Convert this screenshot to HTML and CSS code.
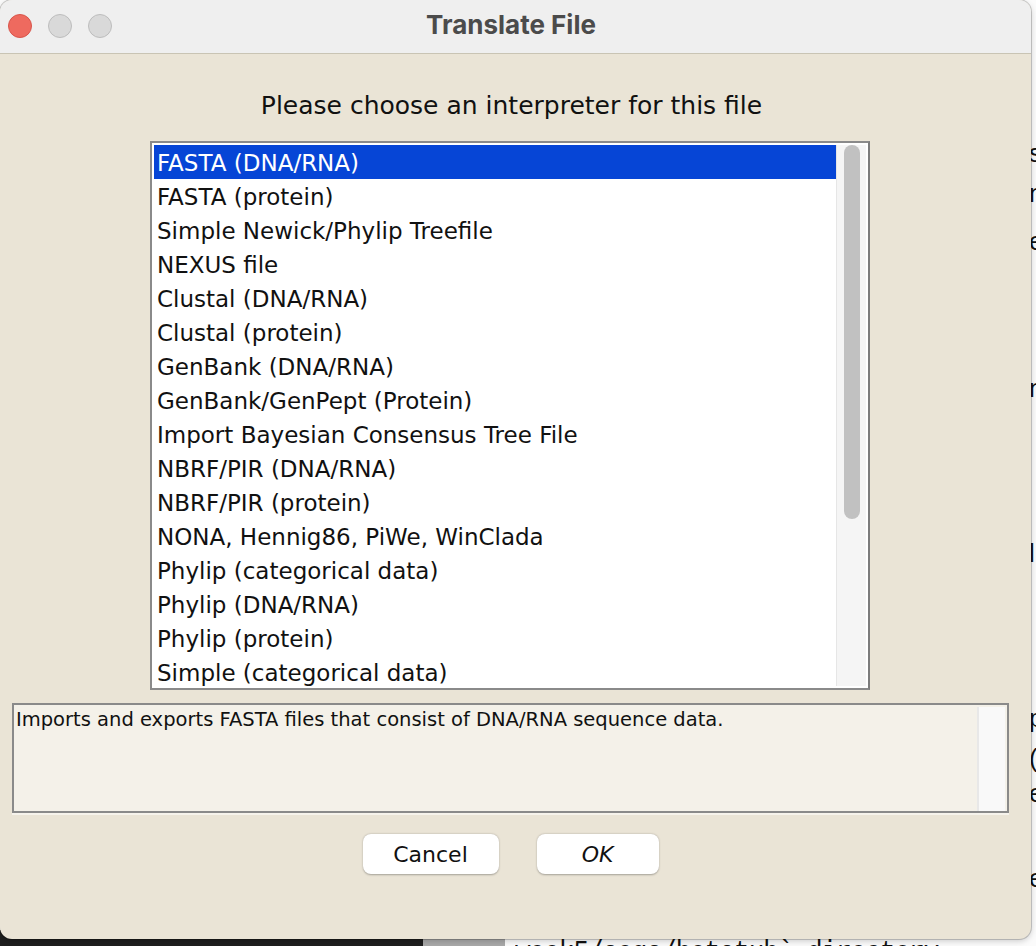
FILE: index.html
```html
<!DOCTYPE html>
<html>
<head>
<meta charset="utf-8">
<link rel="stylesheet" href="styles.css">
</head>
<body>
<div class="screen">
  <div class="doc-edge">
    <span class="g g1">s</span>
    <span class="g g2">n</span>
    <span class="g g3">e</span>
    <span class="g g4">n</span>
    <span class="g g5">l</span>
    <span class="g g6">p</span>
    <span class="g g7">(</span>
    <span class="g g8">e</span>
    <span class="g g9">e</span>
  </div>
  <div class="taskbar">
    <div class="tb-dark"></div>
    <div class="tb-gray"></div>
    <div class="tb-doc"><span>week5/seqs/betatub` directory.</span></div>
  </div>

  <div class="dialog">
    <div class="titlebar">
      <div class="lights">
        <span class="light red"></span>
        <span class="light gray"></span>
        <span class="light gray"></span>
      </div>
      <div class="title">Translate File</div>
    </div>
    <div class="body">
      <div class="heading">Please choose an interpreter for this file</div>
      <div class="listbox">
        <ul class="items">
          <li class="sel">FASTA (DNA/RNA)</li>
          <li>FASTA (protein)</li>
          <li>Simple Newick/Phylip Treefile</li>
          <li>NEXUS file</li>
          <li>Clustal (DNA/RNA)</li>
          <li>Clustal (protein)</li>
          <li>GenBank (DNA/RNA)</li>
          <li>GenBank/GenPept (Protein)</li>
          <li>Import Bayesian Consensus Tree File</li>
          <li>NBRF/PIR (DNA/RNA)</li>
          <li>NBRF/PIR (protein)</li>
          <li>NONA, Hennig86, PiWe, WinClada</li>
          <li>Phylip (categorical data)</li>
          <li>Phylip (DNA/RNA)</li>
          <li>Phylip (protein)</li>
          <li>Simple (categorical data)</li>
        </ul>
        <div class="vscroll"><div class="thumb"></div></div>
      </div>
      <div class="desc">
        <div class="desc-text">Imports and exports FASTA files that consist of DNA/RNA sequence data.</div>
        <div class="desc-scroll"></div>
      </div>
      <div class="buttons">
        <button class="btn cancel">Cancel</button>
        <button class="btn ok">OK</button>
      </div>
    </div>
  </div>
</div>
</body>
</html>
```

FILE: styles.css
```css
* { box-sizing: border-box; }
html, body { margin: 0; padding: 0; }
body {
  width: 1036px;
  height: 946px;
  overflow: hidden;
  background: #fbfbfb;
  font-family: "DejaVu Sans", sans-serif;
}
.screen {
  position: relative;
  width: 1036px;
  height: 946px;
}

/* background window slivers */
.doc-edge {
  position: absolute;
  left: 1029px;
  top: 0;
  width: 7px;
  height: 946px;
  overflow: hidden;
  font-family: "Liberation Sans", sans-serif;
  font-size: 26px;
  color: #111;
}
.g { position: absolute; left: 0; line-height: 1; }
.g1 { top: 140px; }
.g2 { top: 180px; }
.g3 { top: 228px; }
.g4 { top: 375px; }
.g5 { top: 540px; }
.g6 { top: 705px; }
.g7 { top: 745px; }
.g8 { top: 780px; }
.g9 { top: 865px; }

.taskbar {
  position: absolute;
  left: 0;
  top: 930px;
  width: 1036px;
  height: 16px;
  display: flex;
}
.tb-dark { width: 423px; background: #1e1e1e; }
.tb-gray { width: 82px; background: #a9a9a9; }
.tb-doc {
  flex: 1;
  background: #fbfbfb;
  overflow: hidden;
  padding-left: 10px;
}
.tb-doc span {
  display: block;
  font-family: "Liberation Mono", monospace;
  font-size: 26px;
  line-height: 1;
  margin-top: 8px;
  letter-spacing: -1px;
  color: #111;
  transform: scaleY(1.2);
  transform-origin: top left;
}

/* dialog */
.dialog {
  position: absolute;
  left: 0;
  top: 0;
  width: 1031px;
  height: 939px;
  border-radius: 12px;
  overflow: hidden;
  background: #eae4d6;
  box-shadow: 0 0 0 1px rgba(0,0,0,0.18), 0 2px 6px rgba(0,0,0,0.2);
  display: flex;
  flex-direction: column;
}
.titlebar {
  height: 54px;
  flex: none;
  background: #efefef;
  border-bottom: 1px solid #c9c4b4;
  position: relative;
  display: flex;
  align-items: center;
  justify-content: center;
}
.lights {
  position: absolute;
  left: 8px;
  top: 14px;
  display: flex;
  gap: 16px;
}
.light {
  width: 24px;
  height: 24px;
  border-radius: 50%;
}
.light.red { background: #ee6a5f; border: 1px solid #d8554b; }
.light.gray { background: #d9d9d9; border: 1px solid #bdbdbd; }
.title {
  font-family: "Inter", "Liberation Sans", sans-serif;
  font-weight: 700;
  font-size: 26px;
  color: #4b4b4b;
  margin-left: -9px;
  margin-top: -4px;
}

.body {
  flex: 1;
  padding: 37px 22px 0 12px;
  display: flex;
  flex-direction: column;
  align-items: center;
}
.heading {
  font-family: "DejaVu Sans", sans-serif;
  font-size: 25px;
  color: #111;
  line-height: 30px;
  height: 30px;
  margin-left: 2px;
}
.listbox {
  margin-top: 20px;
  width: 720px;
  height: 549px;
  border: 2px solid #8a8a8a;
  border-right-color: #7c7c7c;
  background: #fff;
  padding: 2px;
  display: flex;
  overflow: hidden;
  margin-left: -1px;
}
.items {
  list-style: none;
  margin: 0;
  padding: 0;
  flex: 1;
}
.items li {
  height: 34px;
  line-height: 32px;
  padding: 2px 0 0 3px;
  font-size: 23px;
  color: #111;
  white-space: nowrap;
}
.items li.sel {
  background: #0645d6;
  color: #fff;
}
.vscroll {
  width: 30px;
  flex: none;
  background: #f5f5f5;
  border-left: 1px solid #e6e6e6;
  padding: 0 0 0 7px;
}
.thumb {
  width: 16px;
  height: 374px;
  border-radius: 8px;
  background: #c1c1c1;
}

.desc {
  margin-top: 13px;
  align-self: stretch;
  height: 110px;
  border: 2px solid #8a8a8a;
  background: #f4f1e9;
  display: flex;
  box-shadow: 0 2px 0 #f6f3ec;
}
.desc-text {
  flex: 1;
  font-size: 19.5px;
  padding: 3px 0 0 2px;
  line-height: 24px;
  color: #111;
}
.desc-scroll {
  width: 28px;
  flex: none;
  background: #f9f9f9;
  border-left: 2px solid #e8e8e8;
  margin: 2px 2px 0 0;
}

.buttons {
  margin-top: 21px;
  display: flex;
  gap: 38px;
}
.btn {
  height: 40px;
  border: none;
  border-radius: 8px;
  background: #fff;
  box-shadow: 0 0.5px 2px rgba(0,0,0,0.3);
  font-family: "DejaVu Sans", sans-serif;
  font-size: 22px;
  color: #111;
  padding: 0;
}
.btn.cancel { width: 136px; }
.btn.ok { width: 122px; font-style: italic; }
```
